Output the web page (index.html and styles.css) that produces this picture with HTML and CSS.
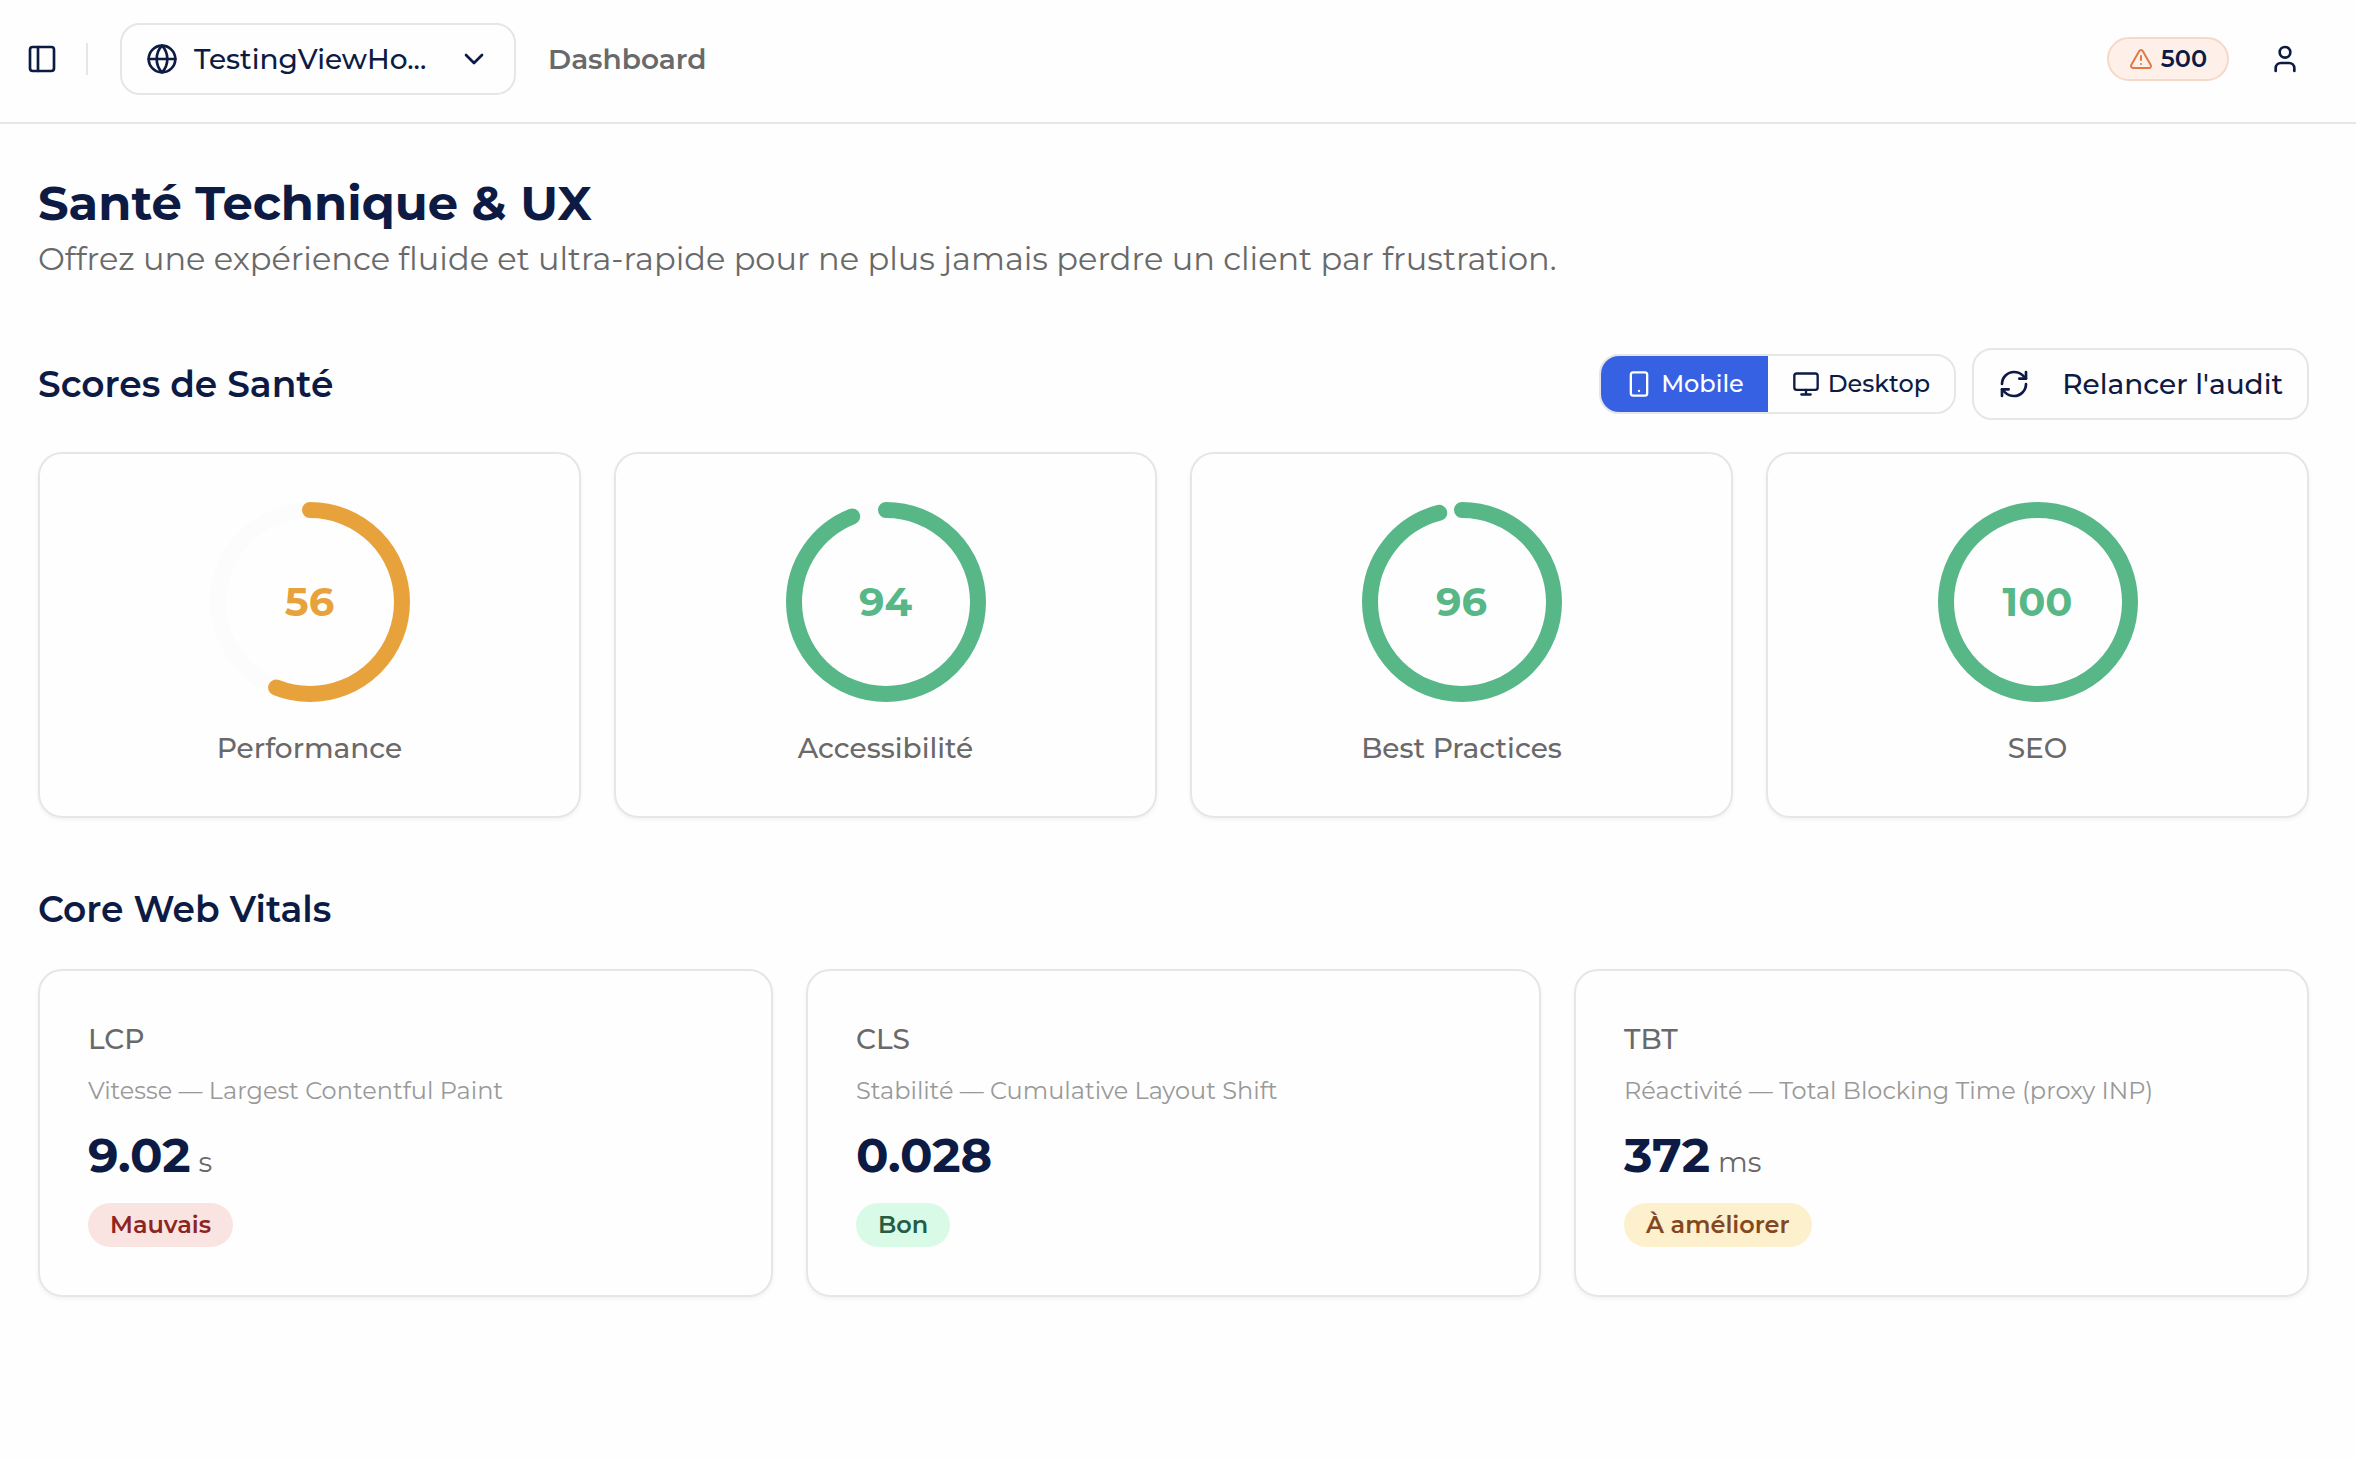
FILE: index.html
```html
<!DOCTYPE html>
<html lang="fr">
<head>
<meta charset="utf-8">
<meta name="viewport" content="width=device-width, initial-scale=1">
<title>Santé Technique &amp; UX</title>
<link rel="stylesheet" href="styles.css">
</head>
<body>
<header class="topbar">
  <button class="icon-button" type="button" aria-label="Menu">
    <svg class="icon" viewBox="0 0 24 24"><rect x="3" y="3" width="18" height="18" rx="2"/><path d="M9 3v18"/></svg>
  </button>
  <span class="divider"></span>
  <button class="site-picker" type="button" aria-haspopup="listbox">
    <svg class="icon" viewBox="0 0 24 24"><circle cx="12" cy="12" r="10"/><path d="M12 2a14.5 14.5 0 0 0 0 20 14.5 14.5 0 0 0 0-20M2 12h20"/></svg>
    <span class="site-name">TestingViewHo...</span>
    <svg class="icon" viewBox="0 0 24 24"><path d="m6 9 6 6 6-6"/></svg>
  </button>
  <a class="crumb" href="#">Dashboard</a>
  <div class="account">
    <span class="credits">
      <svg class="icon icon-small" viewBox="0 0 24 24"><path d="m21.73 18-8-14a2 2 0 0 0-3.48 0l-8 14A2 2 0 0 0 4 21h16a2 2 0 0 0 1.73-3M12 9v4M12 17h.01"/></svg>
      <span class="credits-count">500</span>
    </span>
    <button class="icon-button" type="button" aria-label="Compte">
      <svg class="icon" viewBox="0 0 24 24"><path d="M19 21v-2a4 4 0 0 0-4-4H9a4 4 0 0 0-4 4v2"/><circle cx="12" cy="7" r="4"/></svg>
    </button>
  </div>
</header>

<main class="page">
  <div class="intro">
    <h1 class="title">Santé Technique &amp; UX</h1>
    <p class="subtitle">Offrez une expérience fluide et ultra-rapide pour ne plus jamais perdre un client par frustration.</p>
  </div>

  <section class="section">
    <div class="section-head">
      <h2 class="section-title">Scores de Santé</h2>
      <div class="actions">
        <div class="toggle" role="group" aria-label="Appareil">
          <button class="toggle-option toggle-active" type="button" aria-pressed="true">
            <svg class="icon icon-medium" viewBox="0 0 24 24"><rect x="5" y="2" width="14" height="20" rx="2"/><path d="M12 18h.01"/></svg>
            Mobile
          </button>
          <button class="toggle-option" type="button" aria-pressed="false">
            <svg class="icon icon-medium" viewBox="0 0 24 24"><rect x="2" y="3" width="20" height="14" rx="2"/><path d="M8 21h8M12 17v4"/></svg>
            Desktop
          </button>
        </div>
        <button class="rerun" type="button">
          <svg class="icon" viewBox="0 0 24 24"><path d="M3 12a9 9 0 0 1 9-9 9.75 9.75 0 0 1 6.74 2.74L21 8"/><path d="M21 3v5h-5M21 12a9 9 0 0 1-9 9 9.75 9.75 0 0 1-6.74-2.74L3 16"/><path d="M8 16H3v5"/></svg>
          Relancer l'audit
        </button>
      </div>
    </div>
    <div class="score-grid">
      <article class="card score-card average">
        <div class="gauge">
          <svg class="ring" viewBox="0 0 200 200"><circle class="track" cx="100" cy="100" r="92"/><circle class="arc" cx="100" cy="100" r="92" pathLength="100" stroke-dasharray="56 100"/></svg>
          <span class="score">56</span>
        </div>
        <h3 class="label">Performance</h3>
      </article>
      <article class="card score-card good">
        <div class="gauge">
          <svg class="ring" viewBox="0 0 200 200"><circle class="track" cx="100" cy="100" r="92"/><circle class="arc" cx="100" cy="100" r="92" pathLength="100" stroke-dasharray="94 100"/></svg>
          <span class="score">94</span>
        </div>
        <h3 class="label">Accessibilité</h3>
      </article>
      <article class="card score-card good">
        <div class="gauge">
          <svg class="ring" viewBox="0 0 200 200"><circle class="track" cx="100" cy="100" r="92"/><circle class="arc" cx="100" cy="100" r="92" pathLength="100" stroke-dasharray="96 100"/></svg>
          <span class="score">96</span>
        </div>
        <h3 class="label">Best Practices</h3>
      </article>
      <article class="card score-card good">
        <div class="gauge">
          <svg class="ring" viewBox="0 0 200 200"><circle class="track" cx="100" cy="100" r="92"/><circle class="arc" cx="100" cy="100" r="92" pathLength="100" stroke-dasharray="100 100"/></svg>
          <span class="score">100</span>
        </div>
        <h3 class="label">SEO</h3>
      </article>
    </div>
  </section>

  <section class="section">
    <h2 class="section-title">Core Web Vitals</h2>
    <div class="vital-grid">
      <article class="card vital-card">
        <h3 class="label">LCP</h3>
        <p class="description">Vitesse — Largest Contentful Paint</p>
        <p class="value">9.02<span class="unit">s</span></p>
        <span class="status status-bad">Mauvais</span>
      </article>
      <article class="card vital-card">
        <h3 class="label">CLS</h3>
        <p class="description">Stabilité — Cumulative Layout Shift</p>
        <p class="value">0.028</p>
        <span class="status status-good">Bon</span>
      </article>
      <article class="card vital-card">
        <h3 class="label">TBT</h3>
        <p class="description">Réactivité — Total Blocking Time (proxy INP)</p>
        <p class="value">372<span class="unit">ms</span></p>
        <span class="status status-average">À améliorer</span>
      </article>
    </div>
  </section>
</main>
</body>
</html>
```
FILE: styles.css
```css
:root {
  --navy: #0d1b44;
  --gray: #696969;
  --line: #e6e6e6;
}

* {
  box-sizing: border-box;
}

body {
  margin: 0;
  background: #fefefe;
  color: var(--navy);
  font-family: Montserrat, Inter, sans-serif;
  font-size: 28px;
  font-weight: 500;
  line-height: 40px;
}

h1, h2, h3, p {
  margin: 0;
}

button {
  font: inherit;
  color: inherit;
  background: none;
  border: 0;
  padding: 0;
  cursor: pointer;
}

.icon {
  flex: none;
  width: 32px;
  height: 32px;
  fill: none;
  stroke: currentColor;
  stroke-width: 2;
  stroke-linecap: round;
  stroke-linejoin: round;
}

.icon-medium {
  width: 28px;
  height: 28px;
}

.icon-small {
  width: 24px;
  height: 24px;
}

/* Top bar */
.topbar {
  display: flex;
  align-items: center;
  height: 124px;
  padding: 0 46px 4px 17px;
  border-bottom: 2px solid var(--line);
}

.icon-button {
  display: flex;
  align-items: center;
  justify-content: center;
  width: 50px;
  height: 50px;
}

.divider {
  width: 2px;
  height: 32px;
  margin: 0 32px 0 19px;
  background: var(--line);
}

.site-picker {
  display: flex;
  align-items: center;
  gap: 16px;
  width: 396px;
  height: 72px;
  padding: 0 24px;
  border: 2px solid var(--line);
  border-radius: 20px;
}

.site-name {
  flex: 1;
  text-align: left;
}

.crumb {
  margin-left: 32px;
  color: var(--gray);
  font-weight: 600;
  text-decoration: none;
}

.account {
  display: flex;
  align-items: center;
  gap: 31px;
  margin-left: auto;
}

.credits {
  display: flex;
  align-items: center;
  justify-content: center;
  gap: 8px;
  width: 122px;
  height: 44px;
  border: 2px solid #f6d8c8;
  border-radius: 22px;
  background: #fef0e9;
  color: #dd7a45;
}

.credits-count {
  color: var(--navy);
  font-size: 24px;
  font-weight: 600;
}

/* Page */
.page {
  display: flex;
  flex-direction: column;
  gap: 63px;
  padding: 49px 47px 48px 38px;
}

.title {
  font-size: 48px;
  font-weight: 700;
  line-height: 60px;
}

.subtitle {
  color: var(--gray);
  font-size: 32px;
  font-weight: 400;
  line-height: 52px;
}

.section {
  display: flex;
  flex-direction: column;
  gap: 32px;
}

.section-head {
  display: flex;
  align-items: center;
  justify-content: space-between;
}

.section-title {
  font-size: 36px;
  font-weight: 600;
  line-height: 56px;
}

.actions {
  display: flex;
  align-items: center;
  gap: 16px;
}

.toggle {
  display: flex;
  height: 60px;
  overflow: hidden;
  border: 2px solid var(--line);
  border-radius: 20px;
}

.toggle-option {
  display: flex;
  align-items: center;
  gap: 8px;
  padding: 0 24px;
  font-size: 24px;
}

.toggle-active {
  background: #3661e3;
  color: #ffffff;
}

.rerun {
  display: flex;
  align-items: center;
  gap: 32px;
  height: 72px;
  padding: 0 24px;
  border: 2px solid var(--line);
  border-radius: 20px;
}

.card {
  padding: 48px;
  border: 2px solid var(--line);
  border-radius: 24px;
  box-shadow: 0 2px 4px rgba(0, 0, 0, 0.05);
}

.label {
  color: var(--gray);
  font-size: 28px;
  font-weight: 500;
}

/* Lighthouse scores */
.score-grid {
  display: grid;
  grid-template-columns: repeat(4, 1fr);
  gap: 33px;
}

.score-card {
  display: flex;
  flex-direction: column;
  align-items: center;
  gap: 26px;
}

.good {
  --tone: #57b787;
}

.average {
  --tone: #e8a23b;
}

.gauge {
  display: grid;
  place-items: center;
}

.ring,
.score {
  grid-area: 1 / 1;
}

.ring {
  width: 200px;
  height: 200px;
  transform: rotate(-90deg);
  fill: none;
  stroke-width: 16;
}

.track {
  stroke: #fcfcfc;
}

.arc {
  stroke: var(--tone);
  stroke-linecap: round;
}

.score {
  color: var(--tone);
  font-size: 40px;
  font-weight: 700;
}

/* Core web vitals */
.vital-grid {
  display: grid;
  grid-template-columns: repeat(3, 1fr);
  gap: 33px;
}

.vital-card {
  display: flex;
  flex-direction: column;
  align-items: flex-start;
}

.description {
  margin-top: 14px;
  color: #999999;
  font-size: 24px;
  font-weight: 400;
  line-height: 36px;
}

.value {
  display: flex;
  align-items: baseline;
  gap: 8px;
  margin: 16px 0 18px;
  font-size: 48px;
  font-weight: 700;
  line-height: 60px;
}

.unit {
  color: var(--gray);
  font-size: 28px;
  font-weight: 400;
  line-height: 40px;
}

.status {
  padding: 0 22px;
  border-radius: 22px;
  font-size: 24px;
  font-weight: 600;
  line-height: 44px;
}

.status-bad {
  background: #fae4e2;
  color: #8c2622;
}

.status-good {
  background: #d9fae6;
  color: #245c45;
}

.status-average {
  background: #fcf1cc;
  color: #85471f;
}
```
